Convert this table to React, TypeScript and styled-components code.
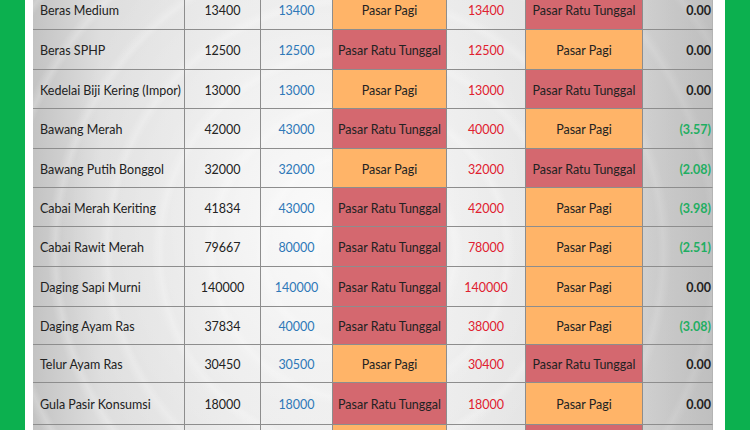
import React from 'react';
import styled, { createGlobalStyle } from 'styled-components';

const Global = createGlobalStyle`
  html, body { margin:0; padding:0; height:100%; overflow:hidden; background:#0cb04f; }
  body { font-family: Lato, 'Open Sans', sans-serif; }
`;

const COLS = [152, 76, 72, 114, 79, 117, 70];
const ORANGE = '#ffb468';
const RED = '#d4686f';

type Market = 'PP' | 'PRT';
type Row = {
  name: string; base: string; high: string; highAt: Market;
  low: string; lowAt: Market; diff: string; h: number;
};

const rows: Row[] = [
  { name: 'Beras Medium', base: '13400', high: '13400', highAt: 'PP', low: '13400', lowAt: 'PRT', diff: '0.00', h: 40 },
  { name: 'Beras SPHP', base: '12500', high: '12500', highAt: 'PRT', low: '12500', lowAt: 'PP', diff: '0.00', h: 40 },
  { name: 'Kedelai Biji Kering (Impor)', base: '13000', high: '13000', highAt: 'PP', low: '13000', lowAt: 'PRT', diff: '0.00', h: 39 },
  { name: 'Bawang Merah', base: '42000', high: '43000', highAt: 'PRT', low: '40000', lowAt: 'PP', diff: '(3.57)', h: 40 },
  { name: 'Bawang Putih Bonggol', base: '32000', high: '32000', highAt: 'PP', low: '32000', lowAt: 'PRT', diff: '(2.08)', h: 39 },
  { name: 'Cabai Merah Keriting', base: '41834', high: '43000', highAt: 'PRT', low: '42000', lowAt: 'PP', diff: '(3.98)', h: 39 },
  { name: 'Cabai Rawit Merah', base: '79667', high: '80000', highAt: 'PRT', low: '78000', lowAt: 'PP', diff: '(2.51)', h: 40 },
  { name: 'Daging Sapi Murni', base: '140000', high: '140000', highAt: 'PRT', low: '140000', lowAt: 'PP', diff: '0.00', h: 40 },
  { name: 'Daging Ayam Ras', base: '37834', high: '40000', highAt: 'PRT', low: '38000', lowAt: 'PP', diff: '(3.08)', h: 38 },
  { name: 'Telur Ayam Ras', base: '30450', high: '30500', highAt: 'PP', low: '30400', lowAt: 'PRT', diff: '0.00', h: 38 },
  { name: 'Gula Pasir Konsumsi', base: '18000', high: '18000', highAt: 'PRT', low: '18000', lowAt: 'PP', diff: '0.00', h: 42 },
];

// next row only peeks in at the bottom edge – fills, no text in view
const peek = { highAt: 'PP' as Market, lowAt: 'PRT' as Market, h: 40 };

const marketName = (m: Market) => (m === 'PP' ? 'Pasar Pagi' : 'Pasar Ratu Tunggal');
const marketFill = (m: Market) => (m === 'PP' ? ORANGE : RED);

/* ===== frame ===== */
const Frame = styled.div`
  margin-left:25px; width:700px; min-height:100vh;
  background:#fff; padding:0 12px 0 8px; box-sizing:border-box;
`;

const Sheet = styled.div`
  margin-top:-10px;
  display:grid; grid-template-columns:${COLS.map(c => `${c}px`).join(' ')};
  background:
    radial-gradient(ellipse 260px 320px at 42% 48%, rgba(255,255,255,.75) 0%, rgba(255,255,255,.25) 60%, rgba(255,255,255,0) 100%),
    repeating-radial-gradient(circle at 48% 55%, rgba(255,255,255,0) 0px, rgba(255,255,255,0) 38px, rgba(255,255,255,.22) 44px, rgba(255,255,255,0) 52px),
    linear-gradient(90deg, #c3c3c3 0%, #dedede 10%, #e9e9e9 30%, #ececec 55%, #e2e2e2 80%, #cdcdcd 94%, #c6c6c6 100%);
`;

type Align = 'left' | 'center' | 'right';
type Tone = 'dark' | 'blue' | 'red' | 'green';

const toneColor: Record<Tone, string> = {
  dark: '#222',
  blue: '#2e78b8',
  red: '#e0202f',
  green: '#1fae62',
};

const Cell = styled.div<{ $h: number; $align?: Align; $fill?: string; $tone?: Tone; $bold?: boolean; $last?: boolean }>`
  height:${p => p.$h}px; box-sizing:border-box;
  display:flex; align-items:center;
  justify-content:${p => (p.$align === 'left' ? 'flex-start' : p.$align === 'right' ? 'flex-end' : 'center')};
  padding:${p => (p.$align === 'left' ? '2px 0 0 7px' : p.$align === 'right' ? '2px 1px 0 0' : '2px 0 0')};
  border-bottom:1px solid #8d8d8d;
  border-right:1px solid ${p => (p.$last ? '#b4b4b4' : '#8d8d8d')};
  background:${p => p.$fill ?? 'transparent'};
  color:${p => toneColor[p.$tone ?? 'dark']};
  font-size:12.5px; font-weight:${p => (p.$bold ? 700 : 400)};
  white-space:nowrap; overflow:hidden;
`;

const DiffCell = styled(Cell)`
  background:linear-gradient(90deg, rgba(200,200,200,.35), rgba(185,185,185,.55));
`;

function MarketCell({ h, m }: { h: number; m: Market }) {
  return <Cell $h={h} $fill={marketFill(m)}>{marketName(m)}</Cell>;
}

export default function App() {
  return (
    <>
      <Global />
      <Frame>
        <Sheet>
          {rows.map(r => (
            <React.Fragment key={r.name}>
              <Cell $h={r.h} $align="left">{r.name}</Cell>
              <Cell $h={r.h}>{r.base}</Cell>
              <Cell $h={r.h} $tone="blue">{r.high}</Cell>
              <MarketCell h={r.h} m={r.highAt} />
              <Cell $h={r.h} $tone="red">{r.low}</Cell>
              <MarketCell h={r.h} m={r.lowAt} />
              <DiffCell $h={r.h} $align="right" $bold $last $tone={r.diff.startsWith('(') ? 'green' : 'dark'}>
                {r.diff}
              </DiffCell>
            </React.Fragment>
          ))}
          <Cell $h={peek.h} />
          <Cell $h={peek.h} />
          <Cell $h={peek.h} />
          <Cell $h={peek.h} $fill={marketFill(peek.highAt)} />
          <Cell $h={peek.h} />
          <Cell $h={peek.h} $fill={marketFill(peek.lowAt)} />
          <DiffCell $h={peek.h} $last />
        </Sheet>
      </Frame>
    </>
  );
}
